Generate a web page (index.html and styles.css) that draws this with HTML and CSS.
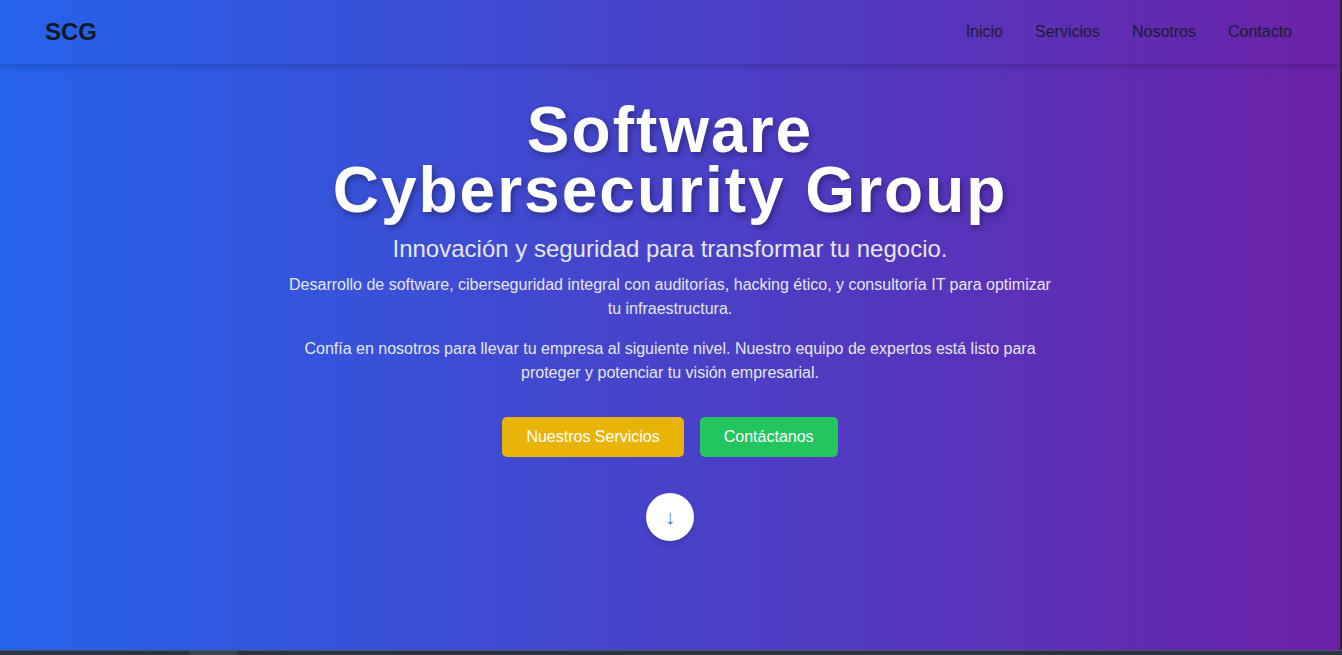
FILE: index.html
```html
<!DOCTYPE html>
<html lang="es">
<head>
<meta charset="utf-8">
<title>Software Cybersecurity Group</title>
<link rel="stylesheet" href="styles.css">
</head>
<body>
<div class="frame">
  <div class="page">
    <header class="navbar">
      <div class="logo">SCG</div>
      <nav class="nav-links">
        <a href="#inicio">Inicio</a>
        <a href="#servicios">Servicios</a>
        <a href="#nosotros">Nosotros</a>
        <a href="#contacto">Contacto</a>
      </nav>
    </header>
    <section class="hero">
      <h1 class="title">Software<br>Cybersecurity Group</h1>
      <p class="subtitle">Innovación y seguridad para transformar tu negocio.</p>
      <p class="lead">Desarrollo de software, ciberseguridad integral con auditorías, hacking ético, y consultoría IT para optimizar tu infraestructura.</p>
      <p class="lead">Confía en nosotros para llevar tu empresa al siguiente nivel. Nuestro equipo de expertos está listo para proteger y potenciar tu visión empresarial.</p>
      <div class="actions">
        <a class="btn btn-yellow" href="#servicios">Nuestros Servicios</a>
        <a class="btn btn-green" href="#contacto">Contáctanos</a>
      </div>
      <a class="scroll-down" href="#servicios">↓</a>
    </section>
  </div>
  <div class="edge-right"></div>
</div>
<div class="bottom-bar"><span class="thumb"></span></div>
</body>
</html>
```

FILE: styles.css
```css
* { box-sizing: border-box; }
html, body {
  margin: 0;
  padding: 0;
  height: 655px;
  overflow: hidden;
  background: #2c333d;
  font-family: "Liberation Sans", Arial, sans-serif;
}
.frame {
  display: flex;
  height: 650px;
}
.page {
  width: 1340px;
  height: 650px;
  background: linear-gradient(90deg, #2563eb 0%, #6b21a8 100%);
  display: flex;
  flex-direction: column;
}
.edge-right {
  width: 2px;
  background: #2a2a2e;
}
.bottom-bar {
  height: 5px;
  background: #2b3440;
  border-top: 1px solid #4a5663;
  position: relative;
}
.bottom-bar .thumb {
  position: absolute;
  left: 189px;
  top: 0;
  width: 48px;
  height: 4px;
  background: #3a4552;
}
.navbar {
  height: 64px;
  display: flex;
  align-items: center;
  justify-content: space-between;
  padding: 0 48px 0 45px;
  box-shadow: 0 4px 6px -1px rgba(0,0,0,0.12), 0 2px 4px -1px rgba(0,0,0,0.08);
  position: relative;
  z-index: 1;
}
.logo {
  font-size: 24px;
  font-weight: 700;
  color: #111827;
}
.nav-links {
  display: flex;
  gap: 32px;
}
.nav-links a {
  color: #1a1f2e;
  text-decoration: none;
  font-size: 16px;
}
.hero {
  flex: 1;
  display: flex;
  flex-direction: column;
  align-items: center;
  text-align: center;
  padding-top: 36px;
}
.title {
  margin: 0;
  font-size: 64px;
  line-height: 60px;
  font-weight: 700;
  letter-spacing: 2px;
  color: #ffffff;
  text-shadow: 2px 3px 6px rgba(0,0,0,0.35);
}
.subtitle {
  margin: 13px 0 0;
  font-size: 24px;
  line-height: 32px;
  color: #e5e7eb;
}
.lead {
  margin: 8px 0 0;
  max-width: 768px;
  font-size: 16px;
  line-height: 24px;
  color: #e5e7eb;
}
.lead + .lead { margin-top: 16px; }
.actions {
  display: flex;
  gap: 16px;
  margin-top: 32px;
}
.btn {
  display: block;
  padding: 8px 24px;
  font-size: 16px;
  line-height: 24px;
  color: #ffffff;
  text-decoration: none;
  border-radius: 5px;
}
.btn-yellow { background: #eab308; }
.btn-green { background: #22c55e; }
.scroll-down {
  margin-top: 36px;
  width: 48px;
  height: 48px;
  border-radius: 50%;
  background: #ffffff;
  color: #3b82f6;
  display: flex;
  align-items: center;
  justify-content: center;
  font-size: 20px;
  text-decoration: none;
  box-shadow: 0 4px 6px rgba(0,0,0,0.15);
}
```
